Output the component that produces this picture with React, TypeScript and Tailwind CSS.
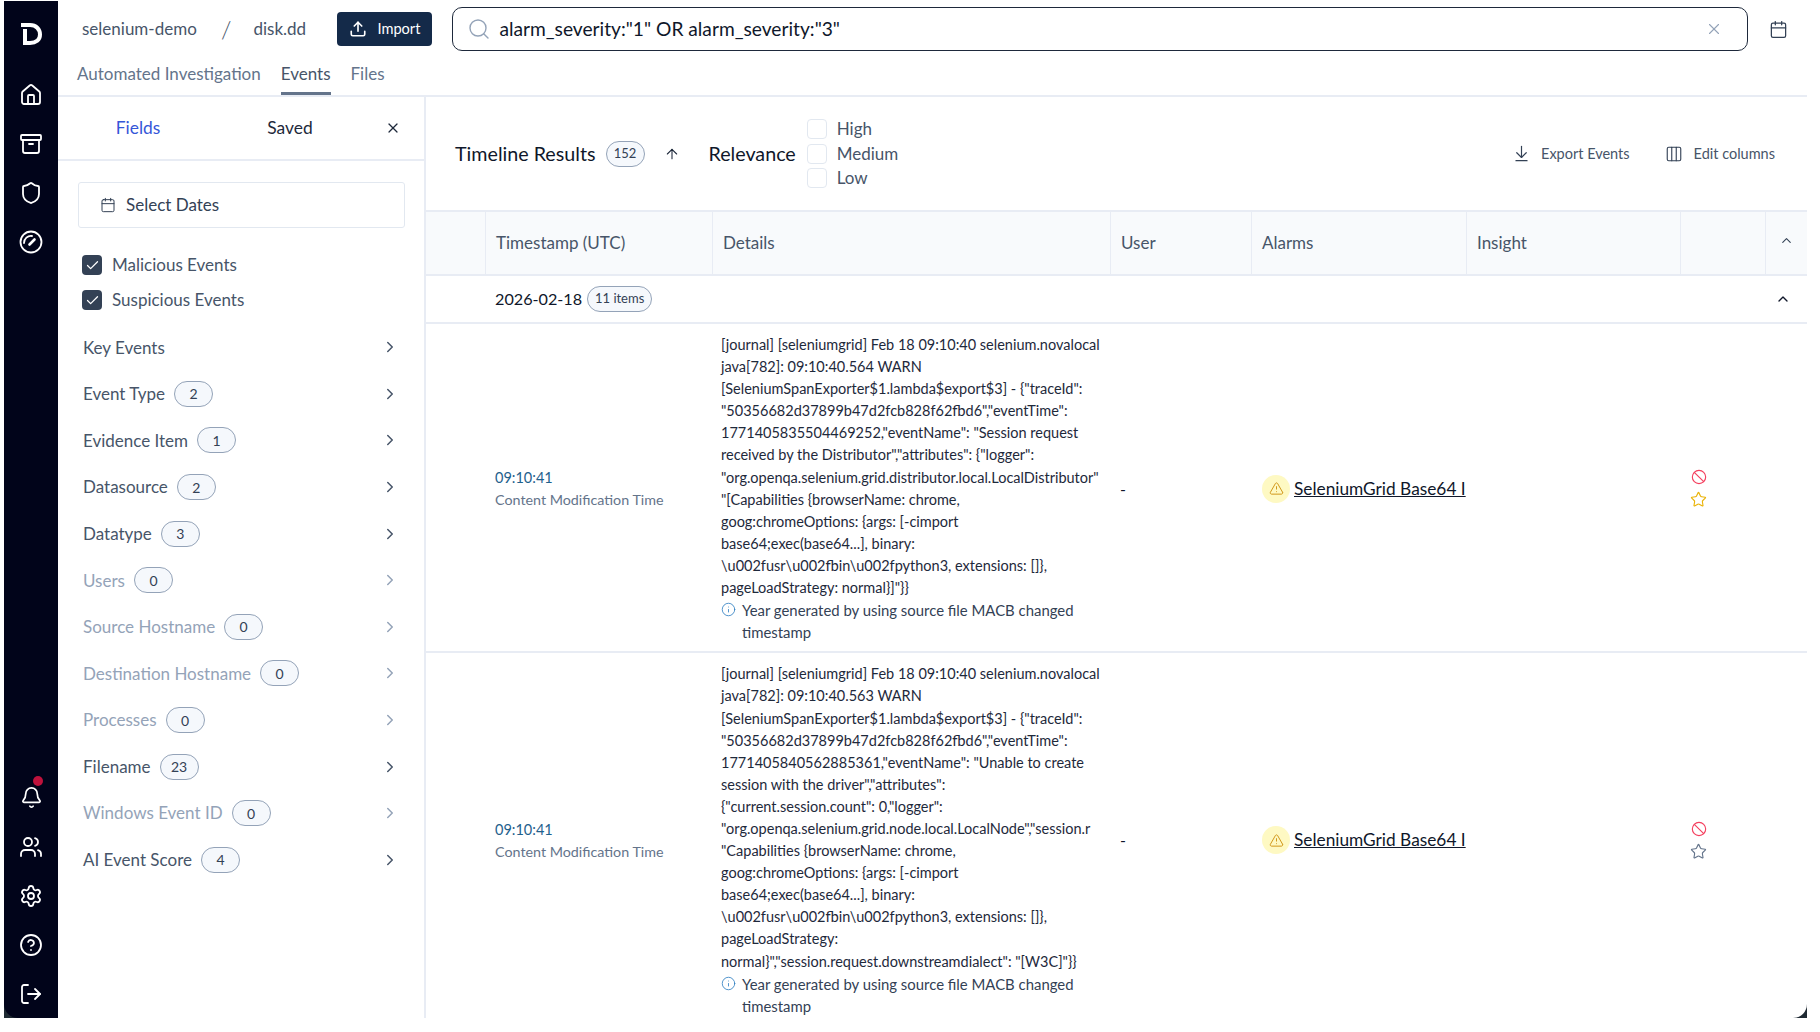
import {
  Archive,
  ArrowDownToLine,
  ArrowUp,
  Ban,
  Bell,
  Calendar,
  Check,
  ChevronRight,
  ChevronUp,
  CircleHelp,
  Columns3,
  Home,
  Info,
  LogOut,
  Search,
  Settings,
  Shield,
  Star,
  TriangleAlert,
  Upload,
  Users,
  X,
} from "lucide-react";

const COLS = "grid grid-cols-[60px_227px_398px_141px_215px_214px_85px_41px]";

const filters = [
  { label: "Key Events" },
  { label: "Event Type", count: 2 },
  { label: "Evidence Item", count: 1 },
  { label: "Datasource", count: 2 },
  { label: "Datatype", count: 3 },
  { label: "Users", count: 0 },
  { label: "Source Hostname", count: 0 },
  { label: "Destination Hostname", count: 0 },
  { label: "Processes", count: 0 },
  { label: "Filename", count: 23 },
  { label: "Windows Event ID", count: 0 },
  { label: "AI Event Score", count: 4 },
];

const rows = [
  {
    starred: true,
    lines: [
      "[journal] [seleniumgrid] Feb 18 09:10:40 selenium.novalocal",
      "java[782]: 09:10:40.564 WARN",
      '[SeleniumSpanExporter$1.lambda$export$3] - {"traceId":',
      '"50356682d37899b47d2fcb828f62fbd6","eventTime":',
      '1771405835504469252,"eventName": "Session request',
      'received by the Distributor","attributes": {"logger":',
      '"org.openqa.selenium.grid.distributor.local.LocalDistributor"',
      '"[Capabilities {browserName: chrome,',
      "goog:chromeOptions: {args: [-cimport",
      "base64;exec(base64...], binary:",
      "\\u002fusr\\u002fbin\\u002fpython3, extensions: []},",
      'pageLoadStrategy: normal}]"}}',
    ],
  },
  {
    starred: false,
    lines: [
      "[journal] [seleniumgrid] Feb 18 09:10:40 selenium.novalocal",
      "java[782]: 09:10:40.563 WARN",
      '[SeleniumSpanExporter$1.lambda$export$3] - {"traceId":',
      '"50356682d37899b47d2fcb828f62fbd6","eventTime":',
      '1771405840562885361,"eventName": "Unable to create',
      'session with the driver","attributes":',
      '{"current.session.count": 0,"logger":',
      '"org.openqa.selenium.grid.node.local.LocalNode","session.r',
      '"Capabilities {browserName: chrome,',
      "goog:chromeOptions: {args: [-cimport",
      "base64;exec(base64...], binary:",
      "\\u002fusr\\u002fbin\\u002fpython3, extensions: []},",
      "pageLoadStrategy:",
      'normal}","session.request.downstreamdialect": "[W3C]"}}',
    ],
  },
];

const Logo = () => (
  <svg width="21" height="22" viewBox="0 0 21 22" fill="none" stroke="white" strokeWidth="4">
    <path d="M0 2h9c6 0 10 4 10 9.500c0 5.500-4 8.500-10 8.500H4V6" />
  </svg>
);

const GaugeIcon = () => (
  <svg width="24" height="24" viewBox="0 0 24 24" fill="none" stroke="currentColor" strokeWidth="1.8" strokeLinecap="round">
    <circle cx="12" cy="12" r="10.500" />
    <path d="M5 13a7 7 0 0 1 8-7" />
    <path d="M10.500 14.500l5-5" strokeWidth="2.600" />
  </svg>
);

const NavSlot = ({ children }: { children: React.ReactNode }) => (
  <div className="relative flex h-[49px] w-full items-center justify-center text-white">{children}</div>
);

const Sidebar = () => (
  <div className="flex h-full w-[54px] shrink-0 flex-col items-center rounded-bl-[14px] bg-[#01041a] pt-[22px]">
    <Logo />
    <div className="mt-[25px] w-full">
      <NavSlot><Home size={24} strokeWidth={1.8} /></NavSlot>
      <NavSlot><Archive size={24} strokeWidth={1.8} /></NavSlot>
      <NavSlot><Shield size={24} strokeWidth={1.8} /></NavSlot>
      <NavSlot><GaugeIcon /></NavSlot>
    </div>
    <div className="mt-auto w-full">
      <NavSlot>
        <Bell size={23} strokeWidth={1.8} />
        <span className="absolute left-[29px] top-[3px] h-[10px] w-[10px] rounded-full bg-[#be123c]" />
      </NavSlot>
      <NavSlot><Users size={24} strokeWidth={1.8} /></NavSlot>
      <NavSlot><Settings size={24} strokeWidth={1.8} /></NavSlot>
      <NavSlot><CircleHelp size={24} strokeWidth={1.8} /></NavSlot>
      <NavSlot><LogOut size={24} strokeWidth={1.8} /></NavSlot>
    </div>
  </div>
);

const TopBar = () => (
  <>
    <div className="flex h-[56px] shrink-0 items-center pl-[24px] text-[17px] text-[#475569]">
      <span className="w-[116px] whitespace-nowrap">selenium-demo</span>
      <span className="ml-[23px] text-[24px] font-light">/</span>
      <span className="ml-[22px] w-[54px]">disk.dd</span>
      <button className="ml-[30px] flex h-[34px] w-[95px] items-center justify-center gap-[10px] rounded-[4px] bg-[#142a49] text-[14.600px] text-white">
        <Upload size={18} strokeWidth={2.2} />
        Import
      </button>
      <div className="ml-[20px] flex h-[44px] w-[1296px] items-center rounded-[10px] border border-[#1e293b] pl-[14px] pr-[24px]">
        <Search size={24} strokeWidth={1.4} className="text-[#94a3b8]" />
        <span className="ml-[8px] flex-1 text-[19.200px] text-[#0f172a]">alarm_severity:"1" OR alarm_severity:"3"</span>
        <X size={18} strokeWidth={1.5} className="text-[#94a3b8]" />
      </div>
      <Calendar size={19} strokeWidth={1.6} className="ml-[21px] text-[#334155]" />
    </div>
    <div className="flex h-[40px] shrink-0 items-start gap-[20px] border-b-2 border-[#e8ecf4] pl-[19px] text-[17px] text-[#64748b]">
      <span className="pt-[4px]">Automated Investigation</span>
      <span className="h-[38px] border-b-[3px] border-[#64748b] pt-[4px] text-[#475569]">Events</span>
      <span className="pt-[4px]">Files</span>
    </div>
  </>
);

const Chip = ({ value }: { value: number }) => (
  <span className="ml-[9px] flex h-[26px] w-[39px] items-center justify-center rounded-full border border-[#94a3b8] bg-[#f5f8fc] text-[14px] text-[#334155]">
    {value}
  </span>
);

const FilterRow = ({ label, count }: { label: string; count?: number }) => {
  const off = count === 0;
  return (
    <div className={`flex h-[46.600px] items-center ${off ? "text-[#94a3b8]" : "text-[#475569]"}`}>
      <span className="text-[17px]">{label}</span>
      {count !== undefined && <Chip value={count} />}
      <ChevronRight size={18} strokeWidth={2} className="ml-auto" />
    </div>
  );
};

const CheckRow = ({ label }: { label: string }) => (
  <div className="flex h-[24px] items-center gap-[10px] text-[17px] text-[#475569]">
    <span className="flex h-[20px] w-[20px] items-center justify-center rounded-[4px] bg-[#334155]">
      <Check size={15} strokeWidth={2} className="text-white" />
    </span>
    {label}
  </div>
);

const LeftPanel = () => (
  <div className="w-[368px] shrink-0 border-r-2 border-[#e8ecf4]">
    <div className="flex h-[64px] items-center border-b-2 border-[#e8ecf4] pl-[4px] text-[17.400px]">
      <span className="w-[152px] text-center text-[#3556d8]">Fields</span>
      <span className="w-[152px] text-center text-[#1e293b]">Saved</span>
      <X size={16} strokeWidth={1.8} className="ml-[19px] text-[#1e293b]" />
    </div>
    <div className="mx-[20px] mt-[21px] flex h-[46px] w-[327px] items-center gap-[10px] rounded-[3px] border border-[#e2e8f0] pl-[21px] text-[17px] text-[#334155]">
      <Calendar size={16} strokeWidth={1.5} />
      Select Dates
    </div>
    <div className="mt-[25px] flex flex-col gap-[11px] pl-[24px]">
      <CheckRow label="Malicious Events" />
      <CheckRow label="Suspicious Events" />
    </div>
    <div className="mt-[12px] pl-[25px] pr-[25px]">
      {filters.map((f) => (
        <FilterRow key={f.label} label={f.label} count={f.count} />
      ))}
    </div>
  </div>
);

const Toolbar = () => (
  <div className="flex h-[113px] shrink-0 items-center pl-[29px] pr-[32px]">
    <span className="text-[19.700px] text-[#0f172a]">Timeline Results</span>
    <span className="ml-[10px] flex h-[26px] w-[39px] items-center justify-center rounded-full border border-[#94a3b8] bg-[#f5f8fc] text-[13px] text-[#334155]">
      152
    </span>
    <ArrowUp size={16} strokeWidth={1.6} className="ml-[19px] text-[#1e293b]" />
    <span className="ml-[29px] text-[19.700px] text-[#0f172a]">Relevance</span>
    <div className="ml-[11px] flex flex-col">
      {["High", "Medium", "Low"].map((level) => (
        <div key={level} className="flex h-[24.500px] items-center gap-[10px] text-[17px] text-[#475569]">
          <span className="h-[20px] w-[20px] rounded-[4px] border border-[#e2e8f0]" />
          {level}
        </div>
      ))}
    </div>
    <div className="ml-auto flex items-center gap-[6px] text-[14.500px] text-[#475569]">
      <ArrowDownToLine size={19} strokeWidth={1.5} className="text-[#334155]" />
      <span className="ml-[4px]">Export Events</span>
      <Columns3 size={18} strokeWidth={1.5} className="ml-[29px] text-[#334155]" />
      <span className="ml-[5px]">Edit columns</span>
    </div>
  </div>
);

const HeaderCell = ({ label }: { label?: string }) => (
  <div className="flex items-center border-r border-[#e8ecf4] pl-[10px] text-[17px] text-[#475569]">{label}</div>
);

const TableHeader = () => (
  <div className={`${COLS} h-[66px] shrink-0 border-y-2 border-[#e8ecf4] bg-[#f8fafc]`}>
    <HeaderCell />
    <HeaderCell label="Timestamp (UTC)" />
    <HeaderCell label="Details" />
    <HeaderCell label="User" />
    <HeaderCell label="Alarms" />
    <HeaderCell label="Insight" />
    <HeaderCell />
    <div className="flex justify-center pt-[21px] text-[#334155]">
      <ChevronUp size={15} strokeWidth={1.8} />
    </div>
  </div>
);

const DateRow = () => (
  <div className="flex h-[48px] shrink-0 items-center border-b-2 border-[#e8ecf4] pl-[69px] pr-[16px]">
    <span className="text-[16.200px] text-[#0f172a]">2026-02-18</span>
    <span className="ml-[5px] flex h-[26px] w-[65px] items-center justify-center rounded-full border border-[#94a3b8] bg-[#f5f8fc] text-[13px] text-[#334155]">
      11 items
    </span>
    <ChevronUp size={16} strokeWidth={2} className="ml-auto text-[#0f172a]" />
  </div>
);

const EventRow = ({ lines, starred }: { lines: string[]; starred: boolean }) => (
  <div className={`${COLS} shrink-0 border-b-2 border-[#e8ecf4] pb-[8px] pt-[10px]`}>
    <div />
    <div className="flex flex-col justify-center gap-[3px] pl-[9px] leading-[19px]">
      <span className="text-[14.500px] text-[#1f618d]">09:10:41</span>
      <span className="text-[14.300px] text-[#64748b]">Content Modification Time</span>
    </div>
    <div className="w-[387px] overflow-hidden pl-[8px] text-[14.500px] leading-[22.100px] text-[#1e293b]">
      {lines.map((line) => (
        <div key={line} className="whitespace-nowrap">{line}</div>
      ))}
      <div className="flex text-[14.900px] text-[#334155]">
        <Info size={15} strokeWidth={1.3} className="mt-[3px] shrink-0 text-[#2b7cc0]" />
        <span className="ml-[6px] w-[350px]">Year generated by using source file MACB changed timestamp</span>
      </div>
    </div>
    <div className="flex items-center pl-[9px] text-[#0f172a]">-</div>
    <div className="flex items-center overflow-hidden pl-[10px]">
      <span className="flex h-[28px] w-[28px] shrink-0 items-center justify-center rounded-full bg-[#fef9c3]">
        <TriangleAlert size={15} strokeWidth={1.4} className="text-[#ca8a04]" />
      </span>
      <span className="ml-[4px] whitespace-nowrap text-[17.300px] text-[#0f172a] underline">SeleniumGrid Base64 I</span>
    </div>
    <div />
    <div className="flex flex-col items-center justify-center gap-[6px] pr-[50px]">
      <Ban size={16} strokeWidth={1.7} className="text-[#f43f5e]" />
      <Star size={17} strokeWidth={1.6} className={starred ? "text-[#eab308]" : "text-[#64748b]"} />
    </div>
    <div />
  </div>
);

const App = () => {
  return (
    <div className="h-[1032px] w-[1820px] overflow-hidden bg-white pb-[14px] pl-[4px] pr-[13px] pt-px font-[Lato,sans-serif]">
      <div className="flex h-full overflow-hidden bg-[#1f2a33]">
        <Sidebar />
        <div className="flex min-w-0 flex-1 flex-col overflow-hidden rounded-br-[14px] bg-white">
          <TopBar />
          <div className="flex min-h-0 flex-1">
            <LeftPanel />
            <div className="flex min-w-0 flex-1 flex-col overflow-hidden">
              <Toolbar />
              <TableHeader />
              <DateRow />
              {rows.map((row) => (
                <EventRow key={row.lines[1]} lines={row.lines} starred={row.starred} />
              ))}
            </div>
          </div>
        </div>
      </div>
    </div>
  );
};

export default App;
